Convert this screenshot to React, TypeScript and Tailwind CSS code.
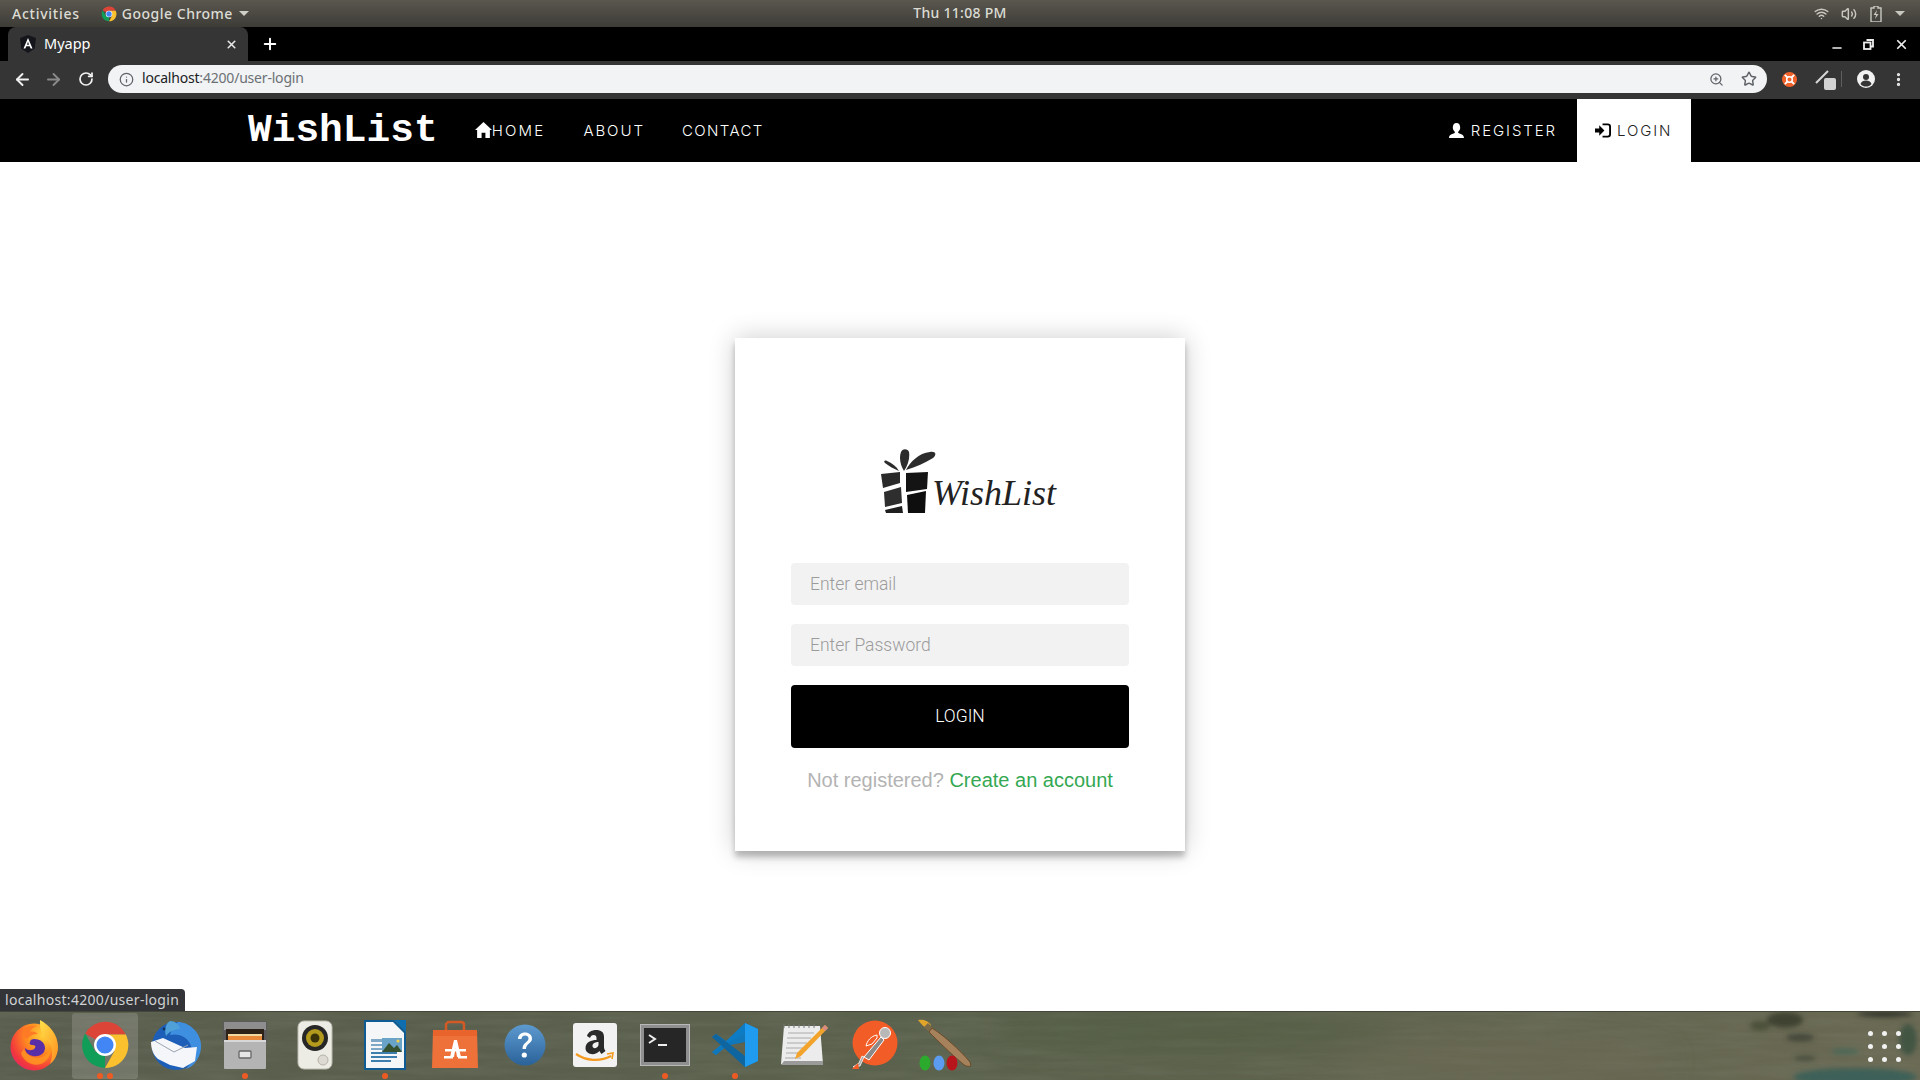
import React from "react";
import { ArrowLeft, ArrowRight, RotateCw, Info, ZoomIn, Star, Plus, X, Wifi, Volume2, Minus, MoreVertical } from "lucide-react";

const Firefox = () => (
  <svg width="50" height="52" viewBox="0 0 50 52">
    <defs>
      <radialGradient id="ff1" cx="0.7" cy="0.25" r="0.95"><stop offset="0" stopColor="#ffd23a" /><stop offset="0.4" stopColor="#ff8a20" /><stop offset="0.75" stopColor="#f2383c" /><stop offset="1" stopColor="#dc1f78" /></radialGradient>
      <linearGradient id="ff2" x1="0" y1="0" x2="1" y2="1"><stop offset="0" stopColor="#ffe14a" /><stop offset="1" stopColor="#ff8f1f" /></linearGradient>
    </defs>
    <circle cx="24" cy="28" r="23.500" fill="url(#ff1)" />
    <path d="M24 20c7 0 11 4 11 9 0 6-6 9-12 8-5-1-8-4-8-8 3 3 8 3 10 0 1-2 0-3-3-3-2 0-3-1-2-3 0-2 2-3 4-3z" fill="#5a2ea6" />
    <path d="M13 10c3-2 8-4 14-3-4 1-6 3-7 6 3-1 6 0 8 2-5 0-9 2-11 5-3-2-5-6-4-10z" fill="#ff7a24" />
    <path d="M30 1c9 5 18 14 18 27 0 8-4 14-8 17 2-5 3-11 1-17-2-7-8-10-10-16-1-4-1-8-1-11z" fill="url(#ff2)" />
    <path d="M14 30c3 8 13 11 20 7 4-2 6-6 6-10 2 8-2 15-9 18-9 3-18-3-20-11z" fill="#ff9a1f" opacity="0.8" />
  </svg>
);

const Chrome = () => (
  <svg width="50" height="50" viewBox="0 0 48 48">
    <path d="M24 24 L5 13 A22 22 0 0 1 44 14 L24 14 Z" fill="#db4437" />
    <path d="M24 24 L24 46 A22 22 0 0 1 5 13 L15 31 Z" fill="#0f9d58" />
    <path d="M24 14 L44 14 A22 22 0 0 1 24 46 L33 30 Z" fill="#fbc02d" />
    <circle cx="24" cy="24" r="10.500" fill="#fff" />
    <circle cx="24" cy="24" r="8.200" fill="#4285f4" />
  </svg>
);

const Thunderbird = () => (
  <svg width="54" height="52" viewBox="0 0 54 52">
    <circle cx="28" cy="27" r="24" fill="#1d5fb8" />
    <path d="M30 3c10 0 22 9 23 22 1 12-7 23-15 25 6-6 8-15 5-23-3-9-12-13-21-11 2-6 5-11 8-13z" fill="#3f8fe0" />
    <path d="M22 2c5 0 9 3 10 8-5 0-10 2-14 7-2-6 0-13 4-15z" fill="#4fa0d8" />
    <path d="M3 23l12-4 22 10 12-1-2 14-12 7-13-3-12-6c-5-4-7-11-7-17z" fill="#f4f6fa" />
    <path d="M7 22l19 11 14-7" stroke="#9aa4b2" strokeWidth="1" fill="none" />
    <circle cx="16" cy="10" r="1.400" fill="#10335c" />
  </svg>
);

const Files = () => (
  <svg width="46" height="50" viewBox="0 0 46 50">
    <rect x="1" y="1" width="44" height="22" rx="2" fill="#5a5a5a" />
    <rect x="2" y="2" width="42" height="8" fill="#8e8e8e" />
    <rect x="4" y="9" width="38" height="12" fill="#2d2218" />
    <rect x="6" y="14" width="34" height="3" fill="#f0d8a0" />
    <rect x="6" y="16" width="34" height="4" fill="#e88a3a" />
    <rect x="2" y="20" width="42" height="29" rx="1" fill="#b4b4b4" />
    <rect x="2" y="20" width="42" height="2" fill="#d8d8d8" />
    <rect x="17" y="31" width="12" height="7" rx="1" fill="#e6e6e6" stroke="#666" strokeWidth="1.300" />
  </svg>
);

const Speaker = () => (
  <svg width="36" height="50" viewBox="0 0 36 50">
    <rect x="1" y="1" width="34" height="48" rx="6" fill="#ecebe4" stroke="#bdbbb0" />
    <circle cx="18" cy="18" r="13" fill="#262626" />
    <circle cx="18" cy="18" r="9" fill="#b49a1c" />
    <circle cx="18" cy="18" r="4.500" fill="#3a3208" />
    <circle cx="26" cy="40" r="5" fill="#dcdad2" stroke="#b5b3a8" />
  </svg>
);

const Writer = () => (
  <svg width="44" height="52" viewBox="0 0 44 52">
    <path d="M1 1h30l12 12v38H1z" fill="#0f5c94" />
    <path d="M3 3h27l11 11v35H3z" fill="#f4f6f8" />
    <path d="M31 1h12v12z" fill="#0f6eb0" />
    <rect x="8" y="20" width="22" height="3" fill="#7fa8c6" />
    <rect x="8" y="25" width="14" height="2" fill="#7fa8c6" />
    <rect x="8" y="29" width="14" height="2" fill="#7fa8c6" />
    <rect x="8" y="33" width="26" height="2" fill="#3c7fae" />
    <rect x="8" y="37" width="26" height="2" fill="#3c7fae" />
    <rect x="8" y="41" width="20" height="2" fill="#3c7fae" />
    <rect x="19" y="19" width="20" height="14" fill="#6aa3c8" />
    <path d="M19 33l7-9 5 5 3-3 5 7z" fill="#36522f" />
    <circle cx="35" cy="22" r="1.600" fill="#f3d04b" />
  </svg>
);

const Store = () => (
  <svg width="46" height="50" viewBox="0 0 46 50">
    <path d="M14 10V5c0-2 2-3 3-3h12c2 0 3 1 3 3v5" stroke="#d25a25" strokeWidth="2.500" fill="none" />
    <path d="M1 10h44l1 38H0z" fill="#ed7138" />
    <path d="M1 10h44v6H1z" fill="#e8642c" />
    <path d="M18 37l4-17h3l4 17h-4l-1.500-9-1.500 9z" fill="#fff" />
    <path d="M13 29h21v2.500H13z" fill="#fff" />
    <rect x="12" y="36" width="9" height="2.500" fill="#fff" />
    <rect x="26" y="36" width="9" height="2.500" fill="#fff" />
  </svg>
);

const Help = () => (
  <svg width="42" height="42" viewBox="0 0 42 42">
    <defs><linearGradient id="hp" x1="0" y1="0" x2="0" y2="1"><stop offset="0" stopColor="#5d9ad0" /><stop offset="1" stopColor="#2a6299" /></linearGradient></defs>
    <circle cx="21" cy="21" r="20.500" fill="url(#hp)" />
    <path d="M14 15c0-4 3-6.500 7-6.500s7 2.500 7 6c0 5-6 5-6 10.500h-3.500c0-7 6-6.500 6-10.500 0-2-1.500-3-3.500-3s-3.500 1.500-3.500 3.500z" fill="#fff" />
    <circle cx="20.300" cy="31" r="2.600" fill="#fff" />
  </svg>
);

const Amazon = () => (
  <svg width="44" height="44" viewBox="0 0 44 44">
    <rect width="44" height="44" rx="3" fill="#f2f2f2" />
    <path d="M14 13c1-4 5-6 9-6 5 0 8 2 8 7v10c0 2 1 3 1.500 4l-4 3c-1-1-1.500-2-2-3-4 5-14 4-14-3 0-6 6-8 11-8v-2c0-2-1-3-3-3-1.500 0-3 1-3.500 3z M25.500 19c-3 0-6 1-6 4 0 3 5 3 6-1z" fill="#2a2a2a" fillRule="evenodd" />
    <path d="M3 31c10 7 24 8 35 2" stroke="#f49a1f" strokeWidth="2.200" fill="none" />
    <path d="M34 31l6-1-1 6" stroke="#f49a1f" strokeWidth="1.600" fill="none" />
  </svg>
);

const Terminal = () => (
  <svg width="50" height="42" viewBox="0 0 50 42">
    <rect x="0.500" y="0.500" width="49" height="41" fill="#8f8f8f" stroke="#b8b8b8" />
    <rect x="4" y="4" width="42" height="34" fill="#262626" />
    <path d="M9 11l6 4-6 4" stroke="#eee" strokeWidth="2" fill="none" />
    <rect x="18" y="20" width="9" height="2" fill="#eee" />
  </svg>
);

const VSCode = () => (
  <svg width="46" height="46" viewBox="0 0 46 46">
    <path d="M33 1l13 6v32l-13 6-11-11h11V12L15 24 4 33l-4-3 10-8L0 15l4-3 10 7z" fill="#0d7cc5" />
    <path d="M33 1l13 6v32l-13 6z" fill="#1f9cf0" />
    <path d="M33 12v8L14 24 4 33l-4-3z" fill="#1177bb" />
    <path d="M0 15l4-3 29 22v11z" fill="#0e65a0" />
  </svg>
);

const Notes = () => (
  <svg width="48" height="46" viewBox="0 0 48 46">
    <path d="M3 4h36l3 38H0z" fill="#ececec" />
    <path d="M3 39h39v4H0z" fill="#9a9a9a" />
    <g stroke="#777" strokeWidth="1"><path d="M3 2v4M8 2v4M13 2v4M18 2v4M23 2v4M28 2v4M33 2v4" /></g>
    <g stroke="#aaa" strokeWidth="1.200"><path d="M7 11h26M6 16h24M6 21h20M5 26h17M5 31h14M4 36h16" /></g>
    <path d="M44 3l3 3-27 28-6 3 2-6z" fill="#f2a32c" />
    <path d="M44 3l3 3-3 3-3-3z" fill="#d98a85" />
  </svg>
);

const Postman = () => (
  <svg width="46" height="50" viewBox="0 0 46 50">
    <circle cx="23" cy="23" r="22.500" fill="#f25c26" />
    <circle cx="33" cy="13" r="5.500" fill="#b8b8b8" stroke="#fff" strokeWidth="1" />
    <path d="M29 17l-17 20 5 3 15-20z" fill="#8a8a8a" stroke="#fff" strokeWidth="1" />
    <path d="M25 15c-6 1-10 6-11 11l6-2 5-6z" fill="#f25c26" stroke="#fff" strokeWidth="1" />
    <path d="M12 37l-4 9-7 1 6-4 3-7z" fill="#a9a9a9" stroke="#fff" strokeWidth="0.800" />
    <path d="M0 49l6-6 1 6z" fill="#f25c26" />
  </svg>
);

const Brush = () => (
  <svg width="54" height="52" viewBox="0 0 54 52">
    <path d="M0 1c6-1 10 1 13 5l-4 4C6 8 3 5 0 1z" fill="#e2a52c" />
    <path d="M10 4l6 6-4 4-6-6z" fill="#7a6a48" />
    <path d="M14 9c10 6 28 22 38 34l1 4c-3 1-6 0-8-2C32 34 20 22 11 13z" fill="#a5825c" stroke="#6b4a2a" strokeWidth="1" />
    <ellipse cx="7" cy="44" rx="5.500" ry="7.500" fill="#2caa2e" />
    <ellipse cx="21" cy="44" rx="5.500" ry="7.500" fill="#5b9cf0" />
    <ellipse cx="34" cy="44" rx="5.500" ry="7.500" fill="#b8141c" />
  </svg>
);

const dock: { el: React.ReactNode; dots: number; active?: boolean }[] = [
  { el: <Firefox />, dots: 0 },
  { el: <Chrome />, dots: 2, active: true },
  { el: <Thunderbird />, dots: 0 },
  { el: <Files />, dots: 1 },
  { el: <Speaker />, dots: 0 },
  { el: <Writer />, dots: 1 },
  { el: <Store />, dots: 0 },
  { el: <Help />, dots: 0 },
  { el: <Amazon />, dots: 0 },
  { el: <Terminal />, dots: 1 },
  { el: <VSCode />, dots: 1 },
  { el: <Notes />, dots: 0 },
  { el: <Postman />, dots: 0 },
  { el: <Brush />, dots: 0 },
];

const GiftLogo = () => (
  <svg width="56" height="65" viewBox="0 0 56 65" className="shrink-0">
    <path d="M23 22C19 16 18 8 20 3c2-4 7-3 8 0 1 6-1 13-5 19z" fill="#2c2c2c" />
    <path d="M25 21c4-8 13-17 24-18 6-1 7 3 3 6-8 5-17 9-27 12z" fill="#2c2c2c" />
    <path d="M18 22C13 20 8 17 4 14c-2-2 0-3 2-2 5 2 9 5 12 10z" fill="#2c2c2c" />
    <path d="M0 25l19-2v11l-17 5z" fill="#2a2a2a" />
    <path d="M3 43l17-5 1 16-17 4z" fill="#2e2e2e" />
    <path d="M4 61l17-4 1 7H5z" fill="#1e1e1e" />
    <path d="M25 24l22-1-1 17-21 3z" fill="#141414" />
    <path d="M26 46l19-4-1 22H27z" fill="#0e0e0e" />
  </svg>
);

export default function App() {
  return (
    <div className="h-screen w-full flex flex-col overflow-hidden bg-white relative font-['Noto_Sans',sans-serif]">
      {/* GNOME top bar */}
      <div className="h-[27px] shrink-0 bg-gradient-to-b from-[#5a574f] to-[#3e3c37] flex items-center text-[#dcdcd4] text-[14px] font-medium relative">
        <span className="ml-[12px] tracking-[0.75px]">Activities</span>
        <svg className="ml-[21px]" width="16" height="16" viewBox="0 0 48 48">
          <path d="M24 24 L5 13 A22 22 0 0 1 44 14 L24 14 Z" fill="#db4437" />
          <path d="M24 24 L24 46 A22 22 0 0 1 5 13 L15 31 Z" fill="#0f9d58" />
          <path d="M24 14 L44 14 A22 22 0 0 1 24 46 L33 30 Z" fill="#fbc02d" />
          <circle cx="24" cy="24" r="10" fill="#fff" />
          <circle cx="24" cy="24" r="8" fill="#4285f4" />
        </svg>
        <span className="ml-[5px] tracking-[0.5px]">Google Chrome</span>
        <span className="ml-[6px] w-0 h-0 border-x-[5px] border-x-transparent border-t-[5px] border-t-[#cfcfc8]" />
        <span className="absolute left-0 right-0 top-[2px] text-center pointer-events-none tracking-[0.3px]">Thu 11:08 PM</span>
        <div className="ml-auto flex items-center mr-[15px] text-[#c8c8c0]">
          <Wifi size={15} strokeWidth={2.4} />
          <Volume2 size={16} strokeWidth={2.2} className="ml-[12px]" />
          <svg className="ml-[13px]" width="12" height="16" viewBox="0 0 12 16">
            <path d="M4 0h4v2h3v14H1V2h3z" fill="none" stroke="#c8c8c0" strokeWidth="1.400" />
            <path d="M7 4L3.500 9H6l-1 4 3.500-5H6z" fill="#c8c8c0" />
          </svg>
          <span className="ml-[13px] w-0 h-0 border-x-[5px] border-x-transparent border-t-[5px] border-t-[#c8c8c0]" />
        </div>
      </div>

      {/* Tab strip */}
      <div className="h-[34px] shrink-0 bg-black flex items-end relative">
        <div className="ml-[8px] w-[240px] h-[34px] bg-[#353535] rounded-t-[8px] flex items-center text-white">
          <svg className="ml-[12px]" width="16" height="18" viewBox="0 0 16 18">
            <path d="M8 0l8 3-1.300 10.500L8 18l-6.700-4.500L0 3z" fill="#15161c" />
            <path d="M8 3l4.500 10.500h-1.900l-.9-2.300H6.300l-.9 2.300H3.500zM8 6.700L7 9.700h2z" fill="#fff" fillRule="evenodd" />
          </svg>
          <span className="ml-[8px] text-[14.500px]">Myapp</span>
          <X size={13} strokeWidth={3} className="ml-auto mr-[10px] text-[#e6e6e6]" />
        </div>
        <Plus size={18} strokeWidth={2.6} className="ml-[13px] mb-[8px] text-white" />
        <div className="ml-auto flex items-center mb-[9px] mr-[11px] text-[#eee]">
          <Minus size={14} strokeWidth={2.4} className="translate-y-[3px] -translate-x-[1px]" />
          <svg className="ml-[18px]" width="11" height="11" viewBox="0 0 11 11">
            <path d="M3.500 1h6.500v6.500H7.500" fill="none" stroke="#eee" strokeWidth="1.800" />
            <rect x="1" y="3.500" width="6.500" height="6.500" fill="none" stroke="#eee" strokeWidth="1.800" />
          </svg>
          <X size={15} strokeWidth={2.8} className="ml-[20px]" />
        </div>
      </div>

      {/* Toolbar */}
      <div className="h-[38px] shrink-0 bg-[#353535] flex items-center pb-[2px] text-white">
        <ArrowLeft size={19} strokeWidth={2.4} className="ml-[13px] text-[#f2f2f2]" />
        <ArrowRight size={19} strokeWidth={2.4} className="ml-[12px] text-[#8a8a8a]" />
        <RotateCw size={16} strokeWidth={2.6} className="ml-[15px] text-[#f2f2f2]" />
        <div className="ml-[14px] w-[1659px] h-[28px] bg-[#f1f3f4] rounded-full flex items-center">
          <Info size={15} strokeWidth={2} className="ml-[11px] text-[#5f6368]" />
          <span className="ml-[8px] text-[14px] leading-[20px] -translate-y-[1px] tracking-[-0.2px] text-[#202124]">
            localhost<span className="text-[#6c7075]">:4200/user-login</span>
          </span>
          <ZoomIn size={15} strokeWidth={2} className="ml-auto text-[#5f6368]" />
          <Star size={16} strokeWidth={2.2} className="ml-[17px] mr-[10px] text-[#5f6368]" />
        </div>
        <svg className="ml-[15px]" width="15" height="15" viewBox="0 0 16 16">
          <circle cx="8" cy="8" r="8" fill="#f0622a" />
          <circle cx="8" cy="8" r="3" fill="none" stroke="#fff" strokeWidth="1.600" />
          <path d="M3 3l3 3M13 3l-3 3M3 13l3-3M13 13l-3-3" stroke="#fff" strokeWidth="2" />
        </svg>
        <div className="ml-[18px] relative w-[16px] h-[22px] shrink-0">
          <svg width="15" height="15" viewBox="0 0 15 15" className="translate-y-[1px]">
            <path d="M1 14L13 2" stroke="#d8d8d8" strokeWidth="2" />
          </svg>
          <span className="absolute left-[9px] top-[10px] w-[12px] h-[12px] rounded-[2px] bg-[#d2d2d2]" />
        </div>
        <div className="ml-[10px] w-px h-[16px] bg-[#5f5f5f]" />
        <svg className="ml-[15px]" width="18" height="18" viewBox="0 0 18 18">
          <circle cx="9" cy="9" r="9" fill="#f2f2f2" />
          <circle cx="9" cy="7" r="3" fill="#353535" />
          <path d="M3.500 14c1-3 3-3.500 5.500-3.500s4.500.5 5.500 3.500C13 16 11 16.500 9 16.500S5 16 3.500 14z" fill="#353535" />
        </svg>
        <MoreVertical size={17} strokeWidth={2.6} className="ml-[15px] text-[#eee]" />
      </div>

      {/* App navbar */}
      <nav className="h-[63px] shrink-0 bg-black flex items-stretch text-white font-['Inter',sans-serif] text-[15px] font-light">
        <span className="ml-[248px] self-center font-['Liberation_Mono',monospace] font-bold text-[39.500px] leading-none">WishList</span>
        <div className="ml-[37px] flex items-center pt-[1px]">
          <svg width="17" height="16" viewBox="0 0 16 15" className="-translate-y-[1px]">
            <path d="M8 0l8 7.500h-2V15H9.800v-5H6.200v5H2V7.500H0z" fill="#fff" />
          </svg>
          <span className="tracking-[2.2px] ml-0">HOME</span>
          <span className="ml-[38px] tracking-[1.95px]">ABOUT</span>
          <span className="ml-[37px] tracking-[1.4px]">CONTACT</span>
        </div>
        <div className="ml-auto mr-[229px] flex items-stretch pt-0">
          <div className="flex items-center mr-[20px] pt-[1px]">
            <svg width="15" height="15" viewBox="0 0 15 15" className="-translate-y-[1px]">
              <path d="M7.500 0c2.500 0 3.700 2 3.700 4.500 0 2-1 3.500-2 4.300v1.200c2 1 5.800 1.200 5.800 5H0c0-3.800 3.800-4 5.800-5V8.800c-1-.8-2-2.300-2-4.300C3.800 2 5 0 7.500 0z" fill="#fff" />
            </svg>
            <span className="ml-[7px] tracking-[1.9px]">REGISTER</span>
          </div>
          <div className="w-[114px] bg-white text-black flex items-center pl-[18px] pt-[1px]">
            <svg width="16" height="15" viewBox="0 0 17 15" className="-translate-y-[1px]">
              <path d="M0 5.500h4.500V2L10 7.500 4.500 13V9.500H0z" fill="#000" />
              <path d="M8 1h5.500c1.500 0 2.500 1 2.500 2.500v8c0 1.500-1 2.500-2.500 2.500H8" stroke="#000" strokeWidth="2" fill="none" />
            </svg>
            <span className="ml-[6px] tracking-[1.9px] text-[#222]">LOGIN</span>
          </div>
        </div>
      </nav>

      {/* Page */}
      <main className="flex-1 flex justify-center pt-[176px] font-['Roboto',sans-serif]">
        <form className="w-[450px] h-[513px] p-[56px] bg-white shadow-[0_0_25px_0_rgba(0,0,0,0.2),0_6px_6px_0_rgba(0,0,0,0.24)]">
          <div className="h-[169px] flex items-start pt-[55px] pl-[90px]">
            <GiftLogo />
            <span className="ml-[-5px] mt-[21px] font-['Liberation_Serif',serif] italic text-[#222] text-[36px] leading-[46px]">WishList</span>
          </div>
          <input className="block w-full h-[42px] px-[19px] bg-[#f2f2f2] rounded-[4px] text-[17.500px] font-light outline-none placeholder:text-[#9b9b9b]" placeholder="Enter email" />
          <input className="block w-full h-[42px] mt-[19px] px-[19px] bg-[#f2f2f2] rounded-[4px] text-[17.500px] font-light outline-none placeholder:text-[#9b9b9b]" placeholder="Enter Password" />
          <button type="button" className="block w-full h-[63px] mt-[19px] bg-black text-white rounded-[4px] text-[17.500px] font-light">LOGIN</button>
          <p className="mt-[17px] text-center font-['Liberation_Sans',sans-serif] text-[20px] leading-[30px] text-[#b3b3b3] whitespace-nowrap">
            Not registered? <span className="text-[#34a853]">Create an account</span>
          </p>
        </form>
      </main>

      {/* Status bubble */}
      <div className="absolute left-0 top-[989px] w-[185px] h-[22px] bg-[#333438] rounded-tr-[4px] text-[#d0d2d4] text-[14px] leading-[22px] pl-[5px] tracking-[0.3px] font-['Noto_Sans',sans-serif] whitespace-nowrap">localhost:4200/user-login</div>

      {/* Dock */}
      <div className="h-[69px] shrink-0 relative flex items-center bg-gradient-to-r from-[#5a5e4e] via-[#5a614c] to-[#6a6953] border-t border-t-[#44463a] overflow-hidden">
        <svg className="absolute inset-0 w-full h-full" viewBox="0 0 1920 69" preserveAspectRatio="none">
          <defs>
            <filter id="bl"><feGaussianBlur stdDeviation="2.500" /></filter>
            <filter id="bl2"><feGaussianBlur stdDeviation="14" /></filter>
            <filter id="tx" x="0" y="0" width="100%" height="100%">
              <feTurbulence type="fractalNoise" baseFrequency="0.012 0.14" numOctaves="3" seed="4" />
              <feColorMatrix values="0 0 0 0 0.2  0 0 0 0 0.22  0 0 0 0 0.16  1.6 0 0 0 -0.55" />
            </filter>
          </defs>
          <rect width="1920" height="69" filter="url(#tx)" opacity="0.32" />
          <g filter="url(#bl2)" opacity="0.5">
            <ellipse cx="1200" cy="20" rx="200" ry="22" fill="#4f5c40" />
            <ellipse cx="1500" cy="50" rx="170" ry="26" fill="#6d6b54" />
          </g>
          <g filter="url(#bl)">
            <ellipse cx="1785" cy="8" rx="18" ry="8" fill="#3a3f2e" opacity="0.9" />
            <ellipse cx="1760" cy="14" rx="10" ry="5" fill="#444a36" opacity="0.8" />
            <ellipse cx="1800" cy="26" rx="14" ry="4" fill="#3c3f33" opacity="0.8" />
            <ellipse cx="1805" cy="47" rx="11" ry="2.500" fill="#40433a" opacity="0.8" />
            <ellipse cx="1885" cy="2" rx="28" ry="3" fill="#30362a" />
            <ellipse cx="1908" cy="28" rx="9" ry="16" fill="#39503f" opacity="0.8" />
            <ellipse cx="1855" cy="66" rx="62" ry="9" fill="#3d6158" />
            <ellipse cx="1845" cy="40" rx="14" ry="3" fill="#4c6757" />
          </g>
        </svg>
        <div className="relative flex items-center h-full">
          {dock.map((d, i) => (
            <div key={i} className="w-[70px] h-full flex items-center justify-center relative">
              {d.active && <span className="absolute left-[2px] right-[2px] top-[1px] bottom-[1px] rounded-[3px] bg-white/15" />}
              <span className="relative flex items-center justify-center -translate-y-[1px]">{d.el}</span>
              {d.dots > 0 && (
                <span className="absolute bottom-[1px] left-0 right-0 flex justify-center gap-[4px]">
                  {Array.from({ length: d.dots }).map((_, j) => (
                    <span key={j} className="w-[6px] h-[6px] rounded-full bg-[#ee5a24]" />
                  ))}
                </span>
              )}
            </div>
          ))}
        </div>
        <div className="relative ml-auto mr-[19px] grid grid-cols-3 gap-x-[9px] gap-y-[8px]">
          {Array.from({ length: 9 }).map((_, i) => (
            <span key={i} className="w-[5px] h-[5px] rounded-full bg-[#f2f2f2]" />
          ))}
        </div>
      </div>
    </div>
  );
}
